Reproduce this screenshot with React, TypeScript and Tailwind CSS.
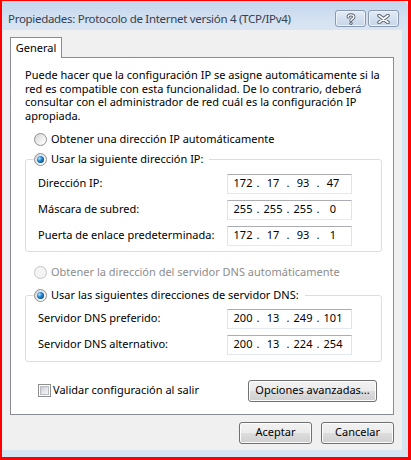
import React from "react";

const font = { fontFamily: '"Noto Sans", "DejaVu Sans", sans-serif' };

// Win7 style radio circle
const Radio = ({ checked, disabled }: { checked?: boolean; disabled?: boolean }) => (
  <span
    className={`relative flex h-[13px] w-[13px] shrink-0 items-center justify-center rounded-full border ${
      disabled
        ? "border-[#c4c4c4] bg-[#f4f4f4]"
        : "border-[#8e8f8f] bg-[linear-gradient(135deg,#d4d4d4_0%,#f6f6f6_70%,#ffffff_100%)]"
    }`}
  >
    {checked && (
      <span className="h-[7px] w-[7px] rounded-full bg-[radial-gradient(circle_at_35%_35%,#b6e6ff_0%,#2e8fd6_35%,#114a87_75%,#0b2d57_100%)]" />
    )}
  </span>
);

const Checkbox = () => (
  <span className="flex h-[13px] w-[13px] shrink-0 items-center justify-center border border-[#8e8f8f] bg-white">
    <span className="h-[9px] w-[9px] border border-[#b9bdc3] bg-[linear-gradient(135deg,#c9cdd3_0%,#e6e8eb_60%,#f8f8f8_100%)]" />
  </span>
);

const IpField = ({ value }: { value: string[] }) => (
  <div className="flex h-[20px] w-[125px] shrink-0 items-center border border-[#e2e3ea] border-t-[#abadb3] border-b-[#e3e9ef] bg-white pl-[2px] text-[11px] text-black">
    {value.map((v, i) => (
      <React.Fragment key={i}>
        {i > 0 && <span className="w-[4px] text-center">.</span>}
        <span className="w-[26px] text-center">{v}</span>
      </React.Fragment>
    ))}
  </div>
);

const Row = ({ label, value }: { label: string; value: string[] }) => (
  <div className="flex h-[20px] items-center justify-between">
    <span>{label}</span>
    <IpField value={value} />
  </div>
);

const WinButton = ({ children, className = "" }: { children: React.ReactNode; className?: string }) => (
  <button
    className={`flex items-center justify-center rounded-[3px] border border-[#707070] bg-[linear-gradient(to_bottom,#f2f2f2_0%,#ebebeb_50%,#dddddd_51%,#cfcfcf_100%)] text-black shadow-[inset_0_0_0_1px_#fcfcfc] ${className}`}
  >
    {children}
  </button>
);

const CaptionButton = ({ kind }: { kind: "help" | "close" }) => (
  <div className="flex h-[17px] w-[31px] items-center justify-center rounded-[3px] border border-[#8a99b0] bg-[linear-gradient(to_bottom,#e4ecf6_0%,#d3e0ef_50%,#c6d6ea_100%)] shadow-[inset_0_0_0_1px_#eef3f9]">
    {kind === "help" ? (
      <svg width="10" height="12" viewBox="0 0 10 12">
        <path d="M2.2 4 C2.2 1.2 7.8 1.2 7.8 4 C7.8 5.8 5 6 5 7.6" fill="none" stroke="#5b6473" strokeWidth="3.2" strokeLinecap="round" />
        <path d="M2.2 4 C2.2 1.2 7.8 1.2 7.8 4 C7.8 5.8 5 6 5 7.6" fill="none" stroke="#ffffff" strokeWidth="1.4" strokeLinecap="round" />
        <circle cx="5" cy="10.3" r="1.6" fill="#5b6473" />
        <circle cx="5" cy="10.3" r="0.7" fill="#ffffff" />
      </svg>
    ) : (
      <svg width="13" height="10" viewBox="0 0 13 10">
        <path d="M2 1.5 L11 8.5 M11 1.5 L2 8.5" stroke="#5b6473" strokeWidth="3.6" strokeLinecap="round" />
        <path d="M2 1.5 L11 8.5 M11 1.5 L2 8.5" stroke="#ffffff" strokeWidth="1.6" strokeLinecap="round" />
      </svg>
    )}
  </div>
);

export default function App() {
  return (
    <div
      className="box-border h-[460px] w-[411px] border-t border-r-[3px] border-b-[3px] border-l-2 border-[#ff0000] bg-[#f3f3f3] text-[11px] text-black"
      style={font}
    >
      <div className="flex h-full flex-col overflow-hidden rounded-tr-[6px] bg-[#d7e4f2] pr-[6px] pb-[7px]">
        {/* title bar */}
        <div className="-mr-[6px] flex h-[29px] shrink-0 items-start justify-between bg-[linear-gradient(to_bottom,#c3d6ec_0%,#d3e1f1_60%,#d9e5f2_100%)] pr-[9px] pl-[6px]">
          <span className="pt-[9px] text-[11.5px] leading-[18px] tracking-[-0.3px] whitespace-nowrap text-[#34404f]">
            Propiedades: Protocolo de Internet versión 4 (TCP/IPv4)
          </span>
          <div className="mt-[9px] flex gap-[2px]">
            <CaptionButton kind="help" />
            <CaptionButton kind="close" />
          </div>
        </div>

        {/* client area */}
        <div className="flex flex-1 flex-col bg-[#f0f0f0] pt-[7px]">
          <div className="relative z-10 -mb-px ml-[8px] flex h-[21px] w-[52px] items-start justify-center border border-b-0 border-[#898c95] bg-white pt-[2px]">
            General
          </div>
          <div className="mx-[8px] flex flex-col border border-[#898c95] bg-white pt-[10px] pr-[11px] pb-[12px] pl-[14px]">
            <p className="leading-[13.67px] whitespace-nowrap">
              Puede hacer que la configuración IP se asigne automáticamente si la
              <br />
              red es compatible con esta funcionalidad. De lo contrario, deberá
              <br />
              consultar con el administrador de red cuál es la configuración IP
              <br />
              apropiada.
            </p>

            <div className="mt-[10px] flex h-[14px] items-center gap-[4px] pl-[9px]">
              <Radio />
              <span>Obtener una dirección IP automáticamente</span>
            </div>

            <fieldset className="mt-[6px] rounded-[3px] border border-[#d5dfe5] pt-[7px] pr-[29px] pb-[5px] pl-[12px]">
              <legend className="-ml-[4px] flex h-[14px] items-center gap-[4px] pr-[6px]">
                <Radio checked />
                <span>Usar la siguiente dirección IP:</span>
              </legend>
              <div className="flex flex-col gap-[6px]">
                <Row label="Dirección IP:" value={["172", "17", "93", "47"]} />
                <Row label="Máscara de subred:" value={["255", "255", "255", "0"]} />
                <Row label="Puerta de enlace predeterminada:" value={["172", "17", "93", "1"]} />
              </div>
            </fieldset>

            <div className="mt-[14px] flex h-[14px] items-center gap-[4px] pl-[9px] text-[#8d8d8d]">
              <Radio disabled />
              <span>Obtener la dirección del servidor DNS automáticamente</span>
            </div>

            <fieldset className="mt-[9px] rounded-[3px] border border-[#d5dfe5] pt-[6px] pr-[29px] pb-[6px] pl-[12px]">
              <legend className="-ml-[4px] flex h-[14px] items-center gap-[4px] pr-[6px]">
                <Radio checked />
                <span>Usar las siguientes direcciones de servidor DNS:</span>
              </legend>
              <div className="flex flex-col gap-[6px]">
                <Row label="Servidor DNS preferido:" value={["200", "13", "249", "101"]} />
                <Row label="Servidor DNS alternativo:" value={["200", "13", "224", "254"]} />
              </div>
            </fieldset>

            <div className="mt-[18px] flex h-[22px] items-center justify-between pr-[5px] pl-[13px]">
              <div className="flex items-center gap-[2px]">
                <Checkbox />
                <span>Validar configuración al salir</span>
              </div>
              <WinButton className="h-[22px] w-[129px]">Opciones avanzadas...</WinButton>
            </div>
          </div>

          <div className="mt-[7px] flex justify-end gap-[9px] pr-[8px]">
            <WinButton className="h-[22px] w-[73px]">Aceptar</WinButton>
            <WinButton className="h-[22px] w-[73px]">Cancelar</WinButton>
          </div>
        </div>
      </div>
    </div>
  );
}
